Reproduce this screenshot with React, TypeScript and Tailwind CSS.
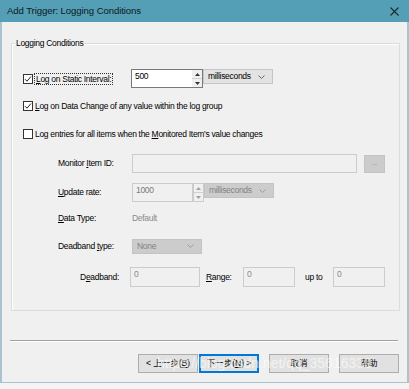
import type { ReactNode } from 'react';

const FONT = { fontFamily: '"Liberation Sans", "Noto Sans CJK SC", Arial, sans-serif' };

function Check({ checked }: { checked: boolean }) {
  return (
    <div className="w-[10px] h-[10px] border border-[#333333] bg-white flex items-center justify-center shrink-0">
      {checked && (
        <svg width="8" height="8" viewBox="0 0 8 8">
          <path d="M1 4.2 L3 6.2 L7 1.5" fill="none" stroke="#222" strokeWidth="1" />
        </svg>
      )}
    </div>
  );
}

function Chevron({ color }: { color: string }) {
  return (
    <svg width="7" height="4" viewBox="0 0 7 4">
      <path d="M0.5 0.5 L3.5 3.5 L6.5 0.5" fill="none" stroke={color} strokeWidth="1" />
    </svg>
  );
}

function Spin({ value, disabled }: { value: string; disabled?: boolean }) {
  return (
    <div className="flex h-[19px]">
      <div
        className={`w-[61px] h-full border px-[3px] pt-[1px] leading-[10px] ${
          disabled ? 'border-[#cccccc] bg-[#f0f0f0] text-[#7a7a7a]' : 'border-[#7a7a7a] border-r-0 bg-white text-black'
        }`}
      >
        {value}
      </div>
      <div className={`w-[11px] h-full flex flex-col border ${disabled ? 'border-[#cccccc]' : 'border-[#7a7a7a] border-l-0'} bg-white`}>
        <div className="flex-1 flex items-center justify-center border-b border-[#d0d0d0] bg-[#f0f0f0]">
          <svg width="5" height="3" viewBox="0 0 5 3"><path d="M0 3 L2.5 0 L5 3 Z" fill={disabled ? '#a0a0a0' : '#333'} /></svg>
        </div>
        <div className="flex-1 flex items-center justify-center bg-[#f0f0f0]">
          <svg width="5" height="3" viewBox="0 0 5 3"><path d="M0 0 L2.5 3 L5 0 Z" fill={disabled ? '#a0a0a0' : '#333'} /></svg>
        </div>
      </div>
    </div>
  );
}

function Combo({ text, width, disabled }: { text: string; width: string; disabled?: boolean }) {
  return (
    <div
      className={`${width} h-[15px] flex items-center justify-between pl-[4px] pr-[7px] border ${
        disabled ? 'bg-[#cccccc] border-[#c4c4c4] text-[#838383]' : 'bg-[#e3e3e3] border-[#c6c6c6] text-black'
      }`}
    >
      <span>{text}</span>
      <Chevron color={disabled ? '#9a9a9a' : '#666'} />
    </div>
  );
}

function Field({ value, width }: { value: string; width: string }) {
  return (
    <div className={`${width} h-[20px] border border-[#cccccc] bg-[#f0f0f0] text-[#8a8a8a] px-[3px] pt-[1px] leading-[10px]`}>
      {value}
    </div>
  );
}

function Label({ children }: { children: ReactNode }) {
  return <div className="w-[74px] shrink-0 text-black">{children}</div>;
}

function Btn({ children, focused }: { children: ReactNode; focused?: boolean }) {
  return (
    <div
      className={`w-[60px] h-[19px] flex items-center justify-center bg-[#e1e1e1] text-black ${
        focused ? 'border border-[#0078d7] shadow-[inset_0_0_0_1px_#0078d7]' : 'border border-[#adadad]'
      }`}
    >
      {children}
    </div>
  );
}

export default function App() {
  return (
    <div className="w-[409px] h-[389px] bg-[#f4f4f4] text-[8.5px] tracking-[-0.3px] overflow-hidden" style={FONT}>
      {/* Title bar */}
      <div className="h-[22px] bg-[#549fb5] flex items-center justify-between pl-[7px] pr-[10px]">
        <span className="text-[9.6px] tracking-[-0.1px] text-[#0d1a1f]">Add Trigger: Logging Conditions</span>
        <svg width="9" height="9" viewBox="0 0 9 9">
          <path d="M0.5 0.5 L8.5 8.5 M8.5 0.5 L0.5 8.5" stroke="#1a2a30" strokeWidth="1.1" />
        </svg>
      </div>

      {/* Body */}
      <div className="relative h-[361px] bg-[#f0f0f0] border-l-2 border-r-2 border-b border-[#a9c4cf] pt-[21px]">
        {/* Group box */}
        <div className="relative ml-[9px] w-[389px] h-[268px] border border-[#dcdcdc] shadow-[inset_1px_1px_0_#ffffff]">
          <span className="absolute left-[3px] top-[-6px] bg-[#f0f0f0] px-[1px] leading-[10px] text-black">
            Logging Conditions
          </span>

          <div className="flex flex-col pl-[11px] pt-[25px]">
            {/* Static interval */}
            <div className="flex items-start h-[20px]">
              <div className="flex items-center h-[19px] w-[108px]">
                <Check checked />
                <span className="ml-[1px] px-[1px] border border-dotted border-[#333] leading-[10px]">
                  <u>L</u>og on Static Interval:
                </span>
              </div>
              <Spin value="500" />
              <Combo text="milliseconds" width="w-[70px]" />
            </div>

            {/* Data change */}
            <div className="flex items-center h-[14px] mt-[10px]">
              <Check checked />
              <span className="ml-[2px]">
                <u>L</u>og on Data Change of any value within the log group
              </span>
            </div>

            {/* Monitored item */}
            <div className="flex items-center h-[14px] mt-[14px]">
              <Check checked={false} />
              <span className="ml-[2px]">
                Log entries for all items when the <u>M</u>onitored Item&apos;s value changes
              </span>
            </div>

            <div className="flex flex-col pl-[35px]">
              <div className="flex items-center h-[19px] mt-[13px]">
                <Label>
                  Monitor <u>I</u>tem ID:
                </Label>
                <div className="w-[225px] h-[19px] border border-[#cccccc] bg-[#f0f0f0]" />
                <div className="ml-[7px] w-[21px] h-[18px] bg-[#cccccc] border border-[#c4c4c4] flex items-center justify-center text-[#8a8a8a] text-[7px]">
                  ...
                </div>
              </div>

              <div className="flex items-start h-[19px] mt-[10px]">
                <div className="h-[19px] flex items-center">
                  <Label>
                    <u>U</u>pdate rate:
                  </Label>
                </div>
                <Spin value="1000" disabled />
                <Combo text="milliseconds" width="w-[70px]" disabled />
              </div>

              <div className="flex items-center h-[14px] mt-[9px]">
                <Label>
                  <u>D</u>ata Type:
                </Label>
                <span className="text-[#8a8a8a]">Default</span>
              </div>

              <div className="flex items-center h-[14px] mt-[14px]">
                <Label>
                  Deadband <u>t</u>ype:
                </Label>
                <Combo text="None" width="w-[70px]" disabled />
              </div>
            </div>

            <div className="flex items-center h-[20px] mt-[14px]">
              <div className="w-[96px] text-right">
                D<u>e</u>adband:
              </div>
              <div className="ml-[11px]">
                <Field value="0" width="w-[70px]" />
              </div>
              <span className="ml-[6px] w-[37px]">
                <u>R</u>ange:
              </span>
              <Field value="0" width="w-[52px]" />
              <span className="ml-[10px] w-[28px]">up to</span>
              <Field value="0" width="w-[52px]" />
            </div>
          </div>
        </div>

        {/* Separator */}
        <div className="ml-[8px] mt-[29px] w-[388px] h-[2px] border-t border-[#a0a0a0] border-b border-b-white" />

        {/* Buttons */}
        <div className="flex mt-[12px] pl-[136px] tracking-normal">
          <Btn>&lt; 上一步(<u>B</u>)</Btn>
          <div className="ml-[1px]">
            <Btn focused>下一步(<u>N</u>) &gt;</Btn>
          </div>
          <div className="ml-[10px]">
            <Btn>取消</Btn>
          </div>
          <div className="ml-[10px]">
            <Btn>帮助</Btn>
          </div>
        </div>

        {/* Watermark */}
        <span className="absolute left-[155px] top-[331px] text-[14px] tracking-[0px] text-white/60 whitespace-nowrap">
          https://blog.csdn.net/qq_35616330
        </span>
      </div>
    </div>
  );
}
